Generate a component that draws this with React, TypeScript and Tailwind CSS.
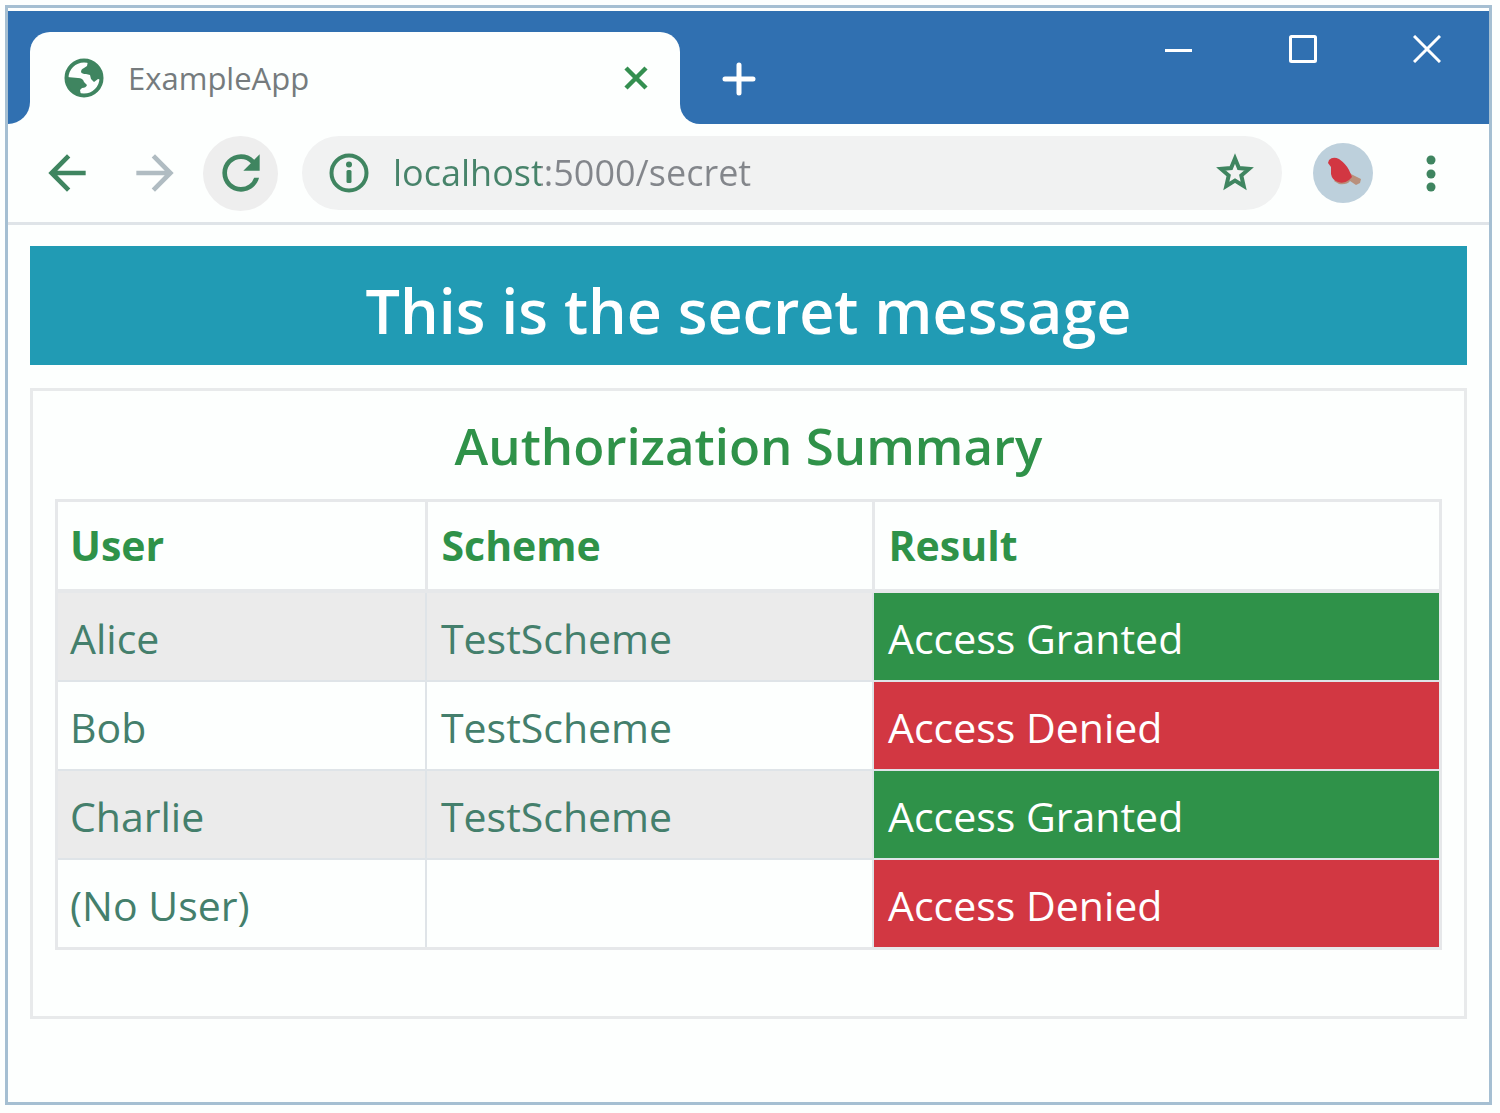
import { useState } from "react";
import { MdArrowBack, MdArrowForward, MdRefresh } from "react-icons/md";

const rows = [
  { user: "Alice", scheme: "TestScheme", granted: true },
  { user: "Bob", scheme: "TestScheme", granted: false },
  { user: "Charlie", scheme: "TestScheme", granted: true },
  { user: "(No User)", scheme: "", granted: false },
];

function GlobeIcon() {
  return (
    <svg viewBox="0 0 40 40" className="size-10 shrink-0" aria-hidden="true">
      <circle cx="20" cy="20" r="17.5" fill="#fdfffe" stroke="#3f8560" strokeWidth="4" />
      <path
        d="M24 3 L23 8 L20 10 Q17 11 17 14 Q18 16 22 16 L26 17 L27 21 L30 24 L34 21 L38 22 Q38 7 24 3Z"
        fill="#3f8560"
      />
      <path
        d="M3 19 L14 20 Q19 20 20 24 L23 27 Q22 30 18 30 L16 32 L17 37 Q3 34 3 19Z"
        fill="#3f8560"
      />
    </svg>
  );
}

function InfoIcon() {
  return (
    <svg viewBox="0 0 40 40" className="size-10 shrink-0" fill="currentColor" aria-hidden="true">
      <circle cx="20" cy="20" r="17.5" fill="none" stroke="currentColor" strokeWidth="4" />
      <circle cx="20" cy="11.5" r="3" />
      <rect x="17.5" y="17" width="5" height="13" rx="1.5" />
    </svg>
  );
}

function StarIcon() {
  return (
    <svg viewBox="0 0 40 40" className="size-10" fill="none" stroke="currentColor" strokeWidth="4" aria-hidden="true">
      <path d="M20 5.5 L23.9 15 L34 15.900 L26.300 22.500 L28.700 33 L20 27.500 L11.300 33 L13.700 22.500 L6 15.900 L16.100 15 Z" />
    </svg>
  );
}

function BirdIcon() {
  return (
    <svg viewBox="0 0 60 60" className="size-15" aria-hidden="true">
      <circle cx="30" cy="30" r="30" fill="#bdd0dc" />
      <path d="M33 25 L38 31 L48 36 L47 40 L43 42 L37 38 Q34 42 26 41 L21 38Z" fill="#b9907c" />
      <path
        d="M15 20 L16 17 Q20 13 26 16 Q33 21 36 27 L39 34 L36 37 Q31 41 25 39 Q19 37 18 31 L18 24Z"
        fill="#d23742"
      />
    </svg>
  );
}

function TitleBar() {
  return (
    <header className="flex items-end bg-[#3070b1] text-white">
      <div className="size-[22px] bg-[#fdfffe]">
        <div className="size-full rounded-br-[22px] bg-[#3070b1]" />
      </div>
      <div className="mt-[21px] flex h-[92px] w-[650px] items-center rounded-t-[20px] bg-[#fdfffe] pr-8 pl-[34px]">
        <GlobeIcon />
        <span className="ml-6 flex-1 text-[31px] text-[#757b7d]">ExampleApp</span>
        <button aria-label="Close tab" className="text-[#348f50]">
          <svg viewBox="0 0 24 24" className="size-6" fill="none" stroke="currentColor" strokeWidth="4.5">
            <path d="M2 2 L22 22 M22 2 L2 22" />
          </svg>
        </button>
      </div>
      <div className="size-5 bg-[#fdfffe]">
        <div className="size-full rounded-bl-[20px] bg-[#3070b1]" />
      </div>
      <button aria-label="New tab" className="mb-7 ml-[22px]">
        <svg viewBox="0 0 34 34" className="size-[34px]" stroke="currentColor" strokeWidth="5" strokeLinecap="round">
          <path d="M3 17 H31 M17 3 V31" />
        </svg>
      </button>
      <div className="mr-12 mb-[61px] ml-auto flex gap-[96px]">
        <button aria-label="Minimize">
          <svg viewBox="0 0 28 28" className="size-7" stroke="currentColor" strokeWidth="3">
            <path d="M0 15.5 H27" />
          </svg>
        </button>
        <button aria-label="Maximize">
          <svg viewBox="0 0 28 28" className="size-7" fill="none" stroke="currentColor" strokeWidth="3">
            <rect x="1.5" y="1.5" width="25" height="25" rx="1" />
          </svg>
        </button>
        <button aria-label="Close window">
          <svg viewBox="0 0 28 28" className="size-7" stroke="currentColor" strokeWidth="3">
            <path d="M1 1 L27 27 M27 1 L1 27" />
          </svg>
        </button>
      </div>
    </header>
  );
}

function Toolbar() {
  const [address, setAddress] = useState("localhost:5000/secret");
  return (
    <nav className="flex h-[101px] items-center border-b-3 border-[#dfe4e8] pr-[53px] pl-[31px] text-[#3f8560]">
      <button aria-label="Back">
        <MdArrowBack className="size-14" />
      </button>
      <button aria-label="Forward" className="ml-8 text-[#b0bcc2]">
        <MdArrowForward className="size-14" />
      </button>
      <button
        aria-label="Reload"
        className="ml-5 flex size-[75px] items-center justify-center rounded-full bg-[#eeeeee]"
      >
        <MdRefresh className="size-14" />
      </button>
      <div className="ml-6 flex h-[74px] flex-1 items-center rounded-full bg-[#f1f2f2] px-[27px]">
        <InfoIcon />
        <input
          aria-label="Address"
          value={address}
          onChange={(e) => setAddress(e.target.value)}
          className="ml-6 min-w-0 flex-1 bg-[linear-gradient(to_right,#47836a_148px,#83868b_148px)] bg-clip-text text-[36px] text-transparent caret-black outline-none"
        />
        <button aria-label="Bookmark this page">
          <StarIcon />
        </button>
      </div>
      <button aria-label="Profile" className="ml-[31px]">
        <BirdIcon />
      </button>
      <button aria-label="Menu" className="ml-[53px]">
        <svg viewBox="0 0 10 38" className="h-[38px] w-[10px]" fill="currentColor">
          <circle cx="5" cy="6" r="4.5" />
          <circle cx="5" cy="20" r="4.5" />
          <circle cx="5" cy="33" r="4.5" />
        </svg>
      </button>
    </nav>
  );
}

function SummaryTable() {
  return (
    <table className="w-full table-fixed border-collapse border-3 border-[#e6e8ea] text-left text-[41px] leading-[59px] text-[#447f6c]">
      <colgroup>
        <col className="w-[26.7%]" />
        <col className="w-[32.3%]" />
        <col />
      </colgroup>
      <thead className="text-[#2f9249]">
        <tr>
          <th className="border-3 border-b-4 border-[#e6e8ea] py-[14px] pr-[14px] pl-3 font-bold">User</th>
          <th className="border-3 border-b-4 border-[#e6e8ea] p-[14px] font-bold">Scheme</th>
          <th className="border-3 border-b-4 border-[#e6e8ea] p-[14px] font-bold">Result</th>
        </tr>
      </thead>
      <tbody>
        {rows.map((row) => (
          <tr key={row.user} className="odd:bg-[#ebebeb]">
            <td className="border-2 border-[#dfe4e8] pt-4 pr-[14px] pb-3 pl-3">{row.user}</td>
            <td className="border-2 border-[#dfe4e8] px-[14px] pt-4 pb-3">{row.scheme}</td>
            <td
              className={
                row.granted
                  ? "border-2 border-[#dfe4e8] bg-[#2f9249] px-[14px] pt-4 pb-3 text-white"
                  : "border-2 border-[#dfe4e8] bg-[#d23742] px-[14px] pt-4 pb-3 text-white"
              }
            >
              {row.granted ? "Access Granted" : "Access Denied"}
            </td>
          </tr>
        ))}
      </tbody>
    </table>
  );
}

export default function App() {
  return (
    <div className="flex min-h-screen flex-col bg-[#fdfffe] pt-[5px] pr-2 pb-2 pl-[5px] font-['Open_Sans','Noto_Sans',sans-serif]">
      <div className="flex flex-1 flex-col border-3 border-[#a5bfd2] pt-[3px]">
        <TitleBar />
        <Toolbar />
        <main className="px-[22px] pt-[21px]">
          <h1 className="bg-[#219bb4] pt-6 pb-[14px] text-center text-[61px] leading-[81px] font-semibold text-white">
            This is the secret message
          </h1>
          <section className="mt-[23px] border-3 border-[#e8eaeb] px-[22px] pt-5 pb-[66px]">
            <h2 className="pb-5 text-center text-[51px] leading-[68px] font-semibold text-[#2f9249]">
              Authorization Summary
            </h2>
            <SummaryTable />
          </section>
        </main>
      </div>
    </div>
  );
}
